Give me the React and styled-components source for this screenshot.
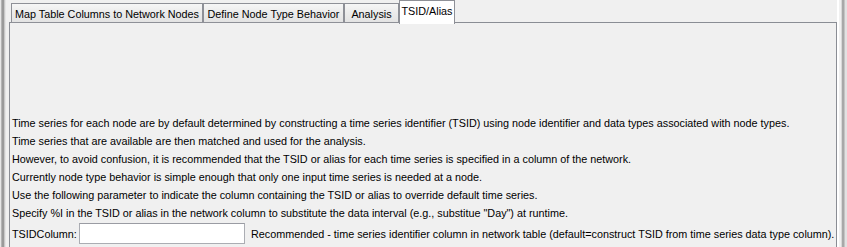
import React from "react";
import styled, { createGlobalStyle } from "styled-components";

const Global = createGlobalStyle`
  html, body { margin: 0; padding: 0; background: #f0f0f0; }
  body { font-family: "Liberation Sans", Arial, sans-serif; font-size: 10.8px; color: #000; }
`;

const Page = styled.div`
  display: flex;
  height: 247px;
  width: 847px;
  overflow: hidden;
  background: #f0f0f0;
`;

const LeftEdge = styled.div`
  width: 9px;
  flex: none;
  background: linear-gradient(
    to right,
    #e6e6e6 0px, #e6e6e6 1px,
    #b4b4b4 1px, #b4b4b4 2px,
    #9a9a9a 2px, #9a9a9a 4px,
    #c8c8c8 4px, #c8c8c8 5px,
    #e4e4e4 5px, #e4e4e4 6px,
    #f0f0f0 6px
  );
`;

const RightEdge = styled.div`
  width: 10px;
  flex: none;
  background: linear-gradient(
    to right,
    #ffffff 0px, #ffffff 2px,
    #f0f0f0 2px, #f0f0f0 4px,
    #d8d8d8 4px, #d8d8d8 5px,
    #a8a8a8 5px, #a8a8a8 7px,
    #c4c4c4 7px, #c4c4c4 8px,
    #e2e2e2 8px
  );
`;

const Main = styled.div`
  flex: 1;
  display: flex;
  flex-direction: column;
  min-width: 0;
`;

const TabBar = styled.div`
  display: flex;
  align-items: flex-end;
  height: 23px;
  padding-left: 2px;
  position: relative;
  z-index: 1;
`;

const Tab = styled.div`
  box-sizing: border-box;
  width: ${(p) => p.$w}px;
  height: ${(p) => (p.$active ? "24px" : "20px")};
  margin-bottom: ${(p) => (p.$active ? "-1px" : "0")};
  padding-top: 3px;
  text-align: center;
  border: 1px solid #8e9097;
  border-bottom: ${(p) => (p.$active ? "none" : "1px solid #8e9097")};
  background: ${(p) =>
    p.$active ? "#ffffff" : "linear-gradient(to bottom, #f6f6f6 0%, #ececec 45%, #e3e3e3 100%)"};
  white-space: nowrap;
  line-height: 14px;
  color: #000;
`;

const Panel = styled.div`
  flex: 1;
  border: 1px solid #8a8d94;
  border-bottom: none;
  background: #f0f0f0;
  padding: 91px 0 0 2px;
  margin-top: -1px;
`;

const Line = styled.div`
  height: 18px;
  line-height: 18px;
  white-space: nowrap;
`;

const FieldRow = styled.div`
  display: flex;
  align-items: center;
  margin-top: 1px;
  height: 21px;
  white-space: nowrap;
`;

const Label = styled.span`
  width: 67px;
  flex: none;
`;

const TextField = styled.div`
  box-sizing: border-box;
  width: 166px;
  height: 21px;
  background: #fff;
  border: 1px solid #abadb3;
  border-top-color: #9a9ca3;
  flex: none;
`;

const Note = styled.span`
  margin-left: 6px;
`;

const tabs = [
  { label: "Map Table Columns to Network Nodes", w: 192 },
  { label: "Define Node Type Behavior", w: 141 },
  { label: "Analysis", w: 55 },
  { label: "TSID/Alias", w: 56 },
];

const lines = [
  "Time series for each node are by default determined by constructing a time series identifier (TSID) using node identifier and data types associated with node types.",
  "Time series that are available are then matched and used for the analysis.",
  "However, to avoid confusion, it is recommended that the TSID or alias for each time series is specified in a column of the network.",
  "Currently node type behavior is simple enough that only one input time series is needed at a node.",
  "Use the following parameter to indicate the column containing the TSID or alias to override default time series.",
  "Specify %I in the TSID or alias in the network column to substitute the data interval (e.g., substitue \"Day\") at runtime.",
];

export default function App() {
  return (
    <>
      <Global />
      <Page>
        <LeftEdge />
        <Main>
          <TabBar>
            {tabs.map((t, i) => (
              <Tab key={t.label} $w={t.w} $active={i === 3}>
                {t.label}
              </Tab>
            ))}
          </TabBar>
          <Panel>
            {lines.map((l) => (
              <Line key={l}>{l}</Line>
            ))}
            <FieldRow>
              <Label>TSIDColumn:</Label>
              <TextField />
              <Note>
                Recommended - time series identifier column in network table (default=construct TSID from time series data type column).
              </Note>
            </FieldRow>
          </Panel>
        </Main>
        <RightEdge />
      </Page>
    </>
  );
}
